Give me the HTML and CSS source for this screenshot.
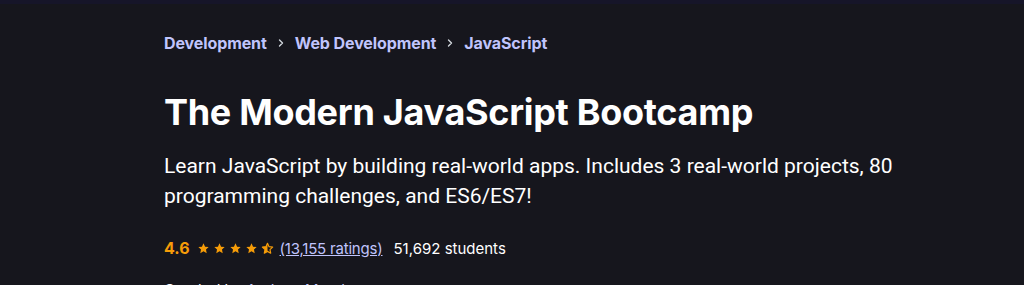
FILE: index.html
```html
<!DOCTYPE html>
<html lang="en">
<head>
<meta charset="utf-8">
<title>The Modern JavaScript Bootcamp</title>
<link rel="stylesheet" href="styles.css">
</head>
<body>
<div class="topstrip"></div>
<header class="course-header">
  <div class="container">
    <nav class="breadcrumb">
      <a href="#" class="crumb">Development</a>
      <svg class="chev" viewBox="0 0 10 10" width="10" height="10"><path d="M3.5 2 L6.5 5 L3.5 8" fill="none" stroke="currentColor" stroke-width="1.4" stroke-linecap="round" stroke-linejoin="round"/></svg>
      <a href="#" class="crumb">Web Development</a>
      <svg class="chev" viewBox="0 0 10 10" width="10" height="10"><path d="M3.5 2 L6.5 5 L3.5 8" fill="none" stroke="currentColor" stroke-width="1.4" stroke-linecap="round" stroke-linejoin="round"/></svg>
      <a href="#" class="crumb">JavaScript</a>
    </nav>
    <h1 class="title">The Modern JavaScript Bootcamp</h1>
    <p class="headline">Learn JavaScript by building real-world apps. Includes 3 real-world projects, 80 programming challenges, and ES6/ES7!</p>
    <div class="stats">
      <span class="rating">4.6</span>
      <span class="stars">
        <svg viewBox="0 0 24 24" class="star"><path d="M12 2.5l2.9 6.1 6.6.8-4.9 4.6 1.3 6.6L12 17.3l-5.9 3.3 1.3-6.6-4.9-4.6 6.6-.8z" fill="currentColor"/></svg>
        <svg viewBox="0 0 24 24" class="star"><path d="M12 2.5l2.9 6.1 6.6.8-4.9 4.6 1.3 6.6L12 17.3l-5.9 3.3 1.3-6.6-4.9-4.6 6.6-.8z" fill="currentColor"/></svg>
        <svg viewBox="0 0 24 24" class="star"><path d="M12 2.5l2.9 6.1 6.6.8-4.9 4.6 1.3 6.6L12 17.3l-5.9 3.3 1.3-6.6-4.9-4.6 6.6-.8z" fill="currentColor"/></svg>
        <svg viewBox="0 0 24 24" class="star"><path d="M12 2.5l2.9 6.1 6.6.8-4.9 4.6 1.3 6.6L12 17.3l-5.9 3.3 1.3-6.6-4.9-4.6 6.6-.8z" fill="currentColor"/></svg>
        <svg viewBox="0 0 24 24" class="star"><path d="M12 2.5l2.9 6.1 6.6.8-4.9 4.6 1.3 6.6L12 17.3l-5.9 3.3 1.3-6.6-4.9-4.6 6.6-.8z" fill="none" stroke="currentColor" stroke-width="2.2" stroke-linejoin="round"/><path d="M12 2.5 L12 17.3 L6.1 20.6 L7.4 14 L2.5 9.4 L9.1 8.6 Z" fill="currentColor"/></svg>
      </span>
      <a href="#" class="count">(13,155 ratings)</a>
      <span class="students">51,692 students</span>
    </div>
    <div class="created">Created by <a href="#" class="author">Andrew Mead</a></div>
  </div>
</header>
</body>
</html>
```
FILE: styles.css
```css
* { box-sizing: border-box; }
html, body { margin: 0; padding: 0; }
body {
  background: #16161d;
  color: #ffffff;
  font-family: "Inter", "Roboto", sans-serif;
  height: 285px;
  overflow: hidden;
}
.topstrip {
  height: 4px;
  background: #161529;
}
.container {
  width: 780px;
  margin-left: 164px;
  padding-top: 28px;
}
.breadcrumb {
  display: flex;
  align-items: center;
  gap: 11px;
  height: 22px;
  font-size: 16px;
  font-weight: 700;
  letter-spacing: -0.1px;
}
.crumb { color: #c0c4fc; text-decoration: none; }
.chev { color: #d1d7dc; display: block; margin: 0 -2px; }
.title {
  margin: 36px 0 0;
  font-size: 36px;
  line-height: 44px;
  font-weight: 700;
  letter-spacing: -0.3px;
}
.headline {
  margin: 17px 0 0;
  font-family: "Roboto", sans-serif;
  font-size: 21px;
  line-height: 30px;
  width: 740px;
}
.stats {
  margin-top: 26px;
  display: flex;
  align-items: center;
  height: 22px;
  font-size: 15px;
}
.rating {
  color: #f69c08;
  font-weight: 700;
  font-size: 16px;
  margin-right: 7px;
}
.stars { display: flex; gap: 3px; color: #f69c08; margin-right: 6px; }
.star { width: 13px; height: 13px; display: block; }
.count { color: #c0c4fc; text-decoration: underline; margin-right: 11px; letter-spacing: -0.2px; }
.students { color: #ffffff; }
.created {
  margin-top: 21px;
  font-size: 15px;
}
.author { color: #c0c4fc; text-decoration: underline; }
```
